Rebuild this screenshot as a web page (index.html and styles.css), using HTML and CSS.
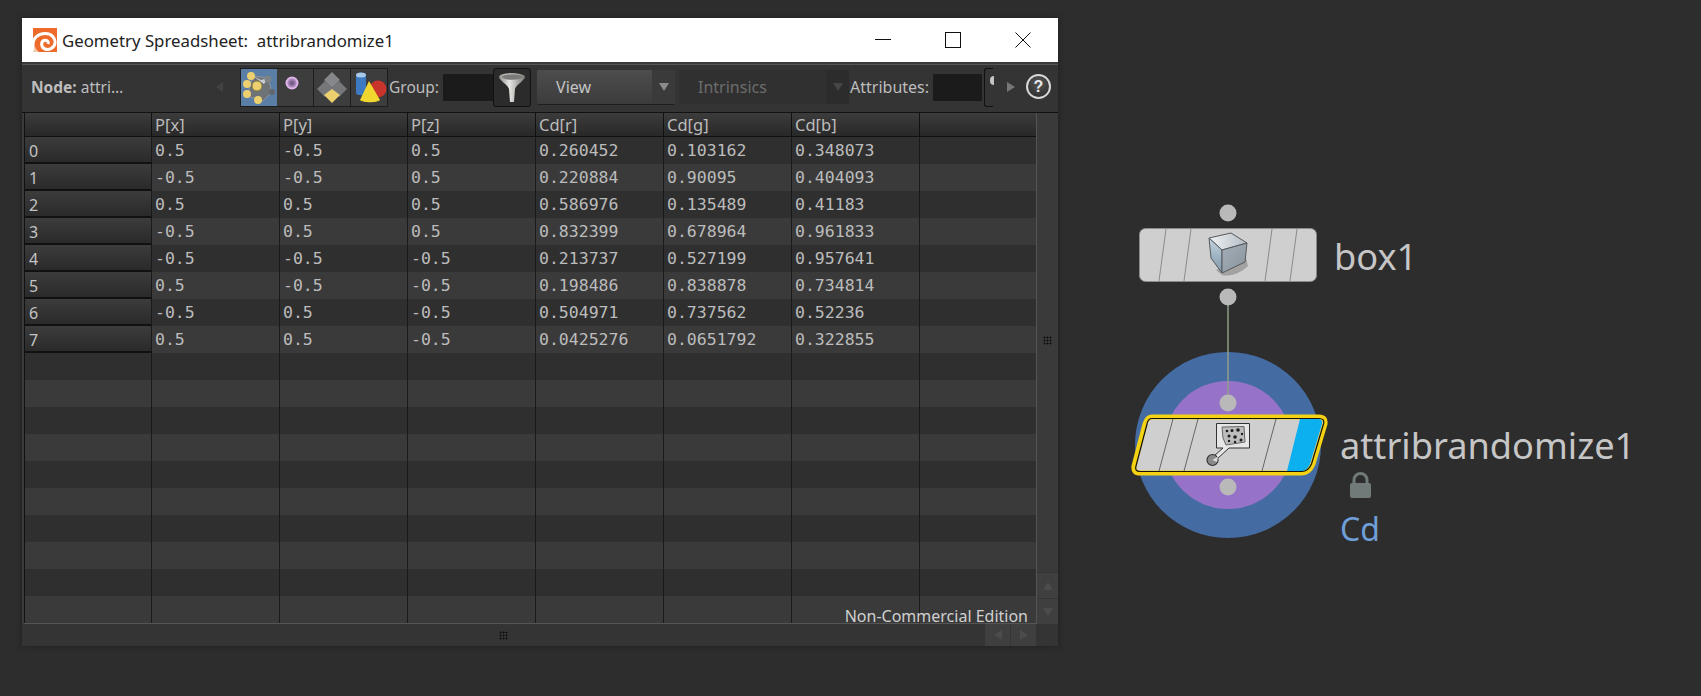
FILE: index.html
```html
<!DOCTYPE html>
<html lang="en">

<head>
    <meta charset="UTF-8">
    <title>Geometry Spreadsheet</title>
    <link rel="stylesheet" href="styles.css">
</head>

<body>
    <div class="window">
        <div class="titlebar">
            <svg class="logo" width="24" height="24" viewBox="0 0 24 24">
                <rect width="24" height="24" fill="#ee6a2a" />
                <path d="M0 24V17C0 10 5 5.500 12 5.500C18.500 5.500 22.500 10 22 15C21.500 20 16 22.500 12 21C8 19.500 7.500 14 11 12.500C13.500 11.500 16 13.500 15 16"
                    fill="none" stroke="#fff" stroke-width="3" />
                <path d="M0 24H6C3 22 2 19 2 17Z" fill="#f6c9ae" />
            </svg>
            <span class="title">Geometry Spreadsheet:&nbsp; attribrandomize1</span>
            <div class="win-controls">
                <svg width="16" height="16" viewBox="0 0 16 16"><path d="M0 7.500H16" stroke="#111" /></svg>
                <svg width="16" height="16" viewBox="0 0 16 16"><rect x="0.500" y="0.500" width="15" height="15" fill="none" stroke="#111" /></svg>
                <svg width="16" height="16" viewBox="0 0 16 16"><path d="M0.500 0.500L15.500 15.500M15.500 0.500L0.500 15.500" stroke="#111" /></svg>
            </div>
        </div>

        <div class="toolbar">
            <div class="node-name"><b>Node:</b> attri…</div>
            <span class="tri-left"></span>
            <div class="mode-group">
                <div class="mode-btn selected">
                    <svg width="36" height="36" viewBox="0 0 36 36">
                        <path d="M12 7L27 9L31 23L22 32L6 27Z" fill="#6e7377" stroke="#8f9499" />
                        <path d="M12 7L20 11L27 9L23 15" fill="#c9ccd0" />
                        <circle cx="27" cy="10" r="3.500" fill="#7c8287" />
                        <circle cx="31" cy="23" r="3" fill="#60676d" />
                        <circle cx="10" cy="7" r="4" fill="#ecd06f" />
                        <circle cx="6" cy="15" r="4" fill="#ecd06f" />
                        <circle cx="16" cy="17" r="5" fill="#ecd06f" stroke="#8a7c40" />
                        <circle cx="6" cy="25" r="4" fill="#ecd06f" />
                        <circle cx="17" cy="31" r="4" fill="#ecd06f" />
                    </svg>
                </div>
                <div class="mode-btn">
                    <svg width="36" height="36" viewBox="0 0 36 36">
                        <circle cx="15" cy="14" r="5.500" fill="#a884b8" stroke="#dfb5e8" stroke-width="2" />
                        <circle cx="15" cy="14" r="2.500" fill="#77628a" />
                    </svg>
                </div>
                <div class="mode-btn sep">
                    <svg width="36" height="36" viewBox="0 0 36 36">
                        <path d="M18 3L26 11L18 19L10 11Z" fill="#85878a" />
                        <path d="M9 12L17 20L9 28L1 20Z" fill="#75777a" transform="translate(2 0)" />
                        <path d="M27 12L35 20L27 28L19 20Z" fill="#75777a" transform="translate(-2 0)" />
                        <path d="M18 20L26 26L18 34L10 26Z" fill="#ecd06f" />
                    </svg>
                </div>
                <div class="mode-btn sep">
                    <svg width="36" height="36" viewBox="0 0 36 36">
                        <circle cx="27" cy="20" r="8.500" fill="#c8332c" />
                        <path d="M5 6C5 3 15 3 15 6V24C15 27 5 27 5 24Z" fill="#3d79c0" />
                        <ellipse cx="10" cy="6" rx="5" ry="2.500" fill="#a9c9e8" />
                        <path d="M18 12L29 31C26 34 12 34 9 31Z" fill="#f0d62e" />
                    </svg>
                </div>
            </div>
            <span class="tb-label group-label">Group:</span>
            <div class="tb-field"></div>
            <div class="funnel-btn">
                <svg width="30" height="34" viewBox="0 0 30 34">
                    <defs>
                        <linearGradient id="funnel-fill" x1="0" x2="1" y1="0" y2="0">
                            <stop offset="0" stop-color="#8e8e8a" />
                            <stop offset="0.400" stop-color="#e6e6e2" />
                            <stop offset="1" stop-color="#777774" />
                        </linearGradient>
                    </defs>
                    <path d="M2 6C2 1 28 1 28 6C28 9 19 14 18 18L17 31L13 31L12 18C11 14 2 9 2 6Z" fill="url(#funnel-fill)" />
                    <ellipse cx="15" cy="6" rx="10" ry="2.800" fill="#7b7b78" />
                </svg>
            </div>
            <div class="dropdown view-drop">
                <span class="drop-text">View</span>
                <span class="drop-arrow"><i></i></span>
            </div>
            <div class="dropdown intrinsics-drop">
                <span class="drop-text">Intrinsics</span>
                <span class="drop-arrow"><i></i></span>
            </div>
            <span class="tb-label attr-label">Attributes:</span>
            <div class="tb-field attr-field"></div>
            <div class="cut-btn"></div>
            <span class="tri-right"></span>
            <div class="help">?</div>
        </div>

        <div class="content">
            <div class="sheet">
                <div class="row head">
                    <div class="rowhead"></div>
                    <div class="cell">P[x]</div>
                    <div class="cell">P[y]</div>
                    <div class="cell">P[z]</div>
                    <div class="cell">Cd[r]</div>
                    <div class="cell">Cd[g]</div>
                    <div class="cell">Cd[b]</div>
                    <div class="cell last"></div>
                </div>
                <div class="row">
                    <div class="rowhead">0</div>
                    <div class="cell">0.5</div><div class="cell">-0.5</div><div class="cell">0.5</div>
                    <div class="cell">0.260452</div><div class="cell">0.103162</div><div class="cell">0.348073</div>
                    <div class="cell last"></div>
                </div>
                <div class="row alt">
                    <div class="rowhead">1</div>
                    <div class="cell">-0.5</div><div class="cell">-0.5</div><div class="cell">0.5</div>
                    <div class="cell">0.220884</div><div class="cell">0.90095</div><div class="cell">0.404093</div>
                    <div class="cell last"></div>
                </div>
                <div class="row">
                    <div class="rowhead">2</div>
                    <div class="cell">0.5</div><div class="cell">0.5</div><div class="cell">0.5</div>
                    <div class="cell">0.586976</div><div class="cell">0.135489</div><div class="cell">0.41183</div>
                    <div class="cell last"></div>
                </div>
                <div class="row alt">
                    <div class="rowhead">3</div>
                    <div class="cell">-0.5</div><div class="cell">0.5</div><div class="cell">0.5</div>
                    <div class="cell">0.832399</div><div class="cell">0.678964</div><div class="cell">0.961833</div>
                    <div class="cell last"></div>
                </div>
                <div class="row">
                    <div class="rowhead">4</div>
                    <div class="cell">-0.5</div><div class="cell">-0.5</div><div class="cell">-0.5</div>
                    <div class="cell">0.213737</div><div class="cell">0.527199</div><div class="cell">0.957641</div>
                    <div class="cell last"></div>
                </div>
                <div class="row alt">
                    <div class="rowhead">5</div>
                    <div class="cell">0.5</div><div class="cell">-0.5</div><div class="cell">-0.5</div>
                    <div class="cell">0.198486</div><div class="cell">0.838878</div><div class="cell">0.734814</div>
                    <div class="cell last"></div>
                </div>
                <div class="row">
                    <div class="rowhead">6</div>
                    <div class="cell">-0.5</div><div class="cell">0.5</div><div class="cell">-0.5</div>
                    <div class="cell">0.504971</div><div class="cell">0.737562</div><div class="cell">0.52236</div>
                    <div class="cell last"></div>
                </div>
                <div class="row alt">
                    <div class="rowhead">7</div>
                    <div class="cell">0.5</div><div class="cell">0.5</div><div class="cell">-0.5</div>
                    <div class="cell">0.0425276</div><div class="cell">0.0651792</div><div class="cell">0.322855</div>
                    <div class="cell last"></div>
                </div>
                <div class="row empty"><div class="rowhead"></div><div class="cell"></div><div class="cell"></div><div class="cell"></div><div class="cell"></div><div class="cell"></div><div class="cell"></div><div class="cell last"></div></div>
                <div class="row alt empty"><div class="rowhead"></div><div class="cell"></div><div class="cell"></div><div class="cell"></div><div class="cell"></div><div class="cell"></div><div class="cell"></div><div class="cell last"></div></div>
                <div class="row empty"><div class="rowhead"></div><div class="cell"></div><div class="cell"></div><div class="cell"></div><div class="cell"></div><div class="cell"></div><div class="cell"></div><div class="cell last"></div></div>
                <div class="row alt empty"><div class="rowhead"></div><div class="cell"></div><div class="cell"></div><div class="cell"></div><div class="cell"></div><div class="cell"></div><div class="cell"></div><div class="cell last"></div></div>
                <div class="row empty"><div class="rowhead"></div><div class="cell"></div><div class="cell"></div><div class="cell"></div><div class="cell"></div><div class="cell"></div><div class="cell"></div><div class="cell last"></div></div>
                <div class="row alt empty"><div class="rowhead"></div><div class="cell"></div><div class="cell"></div><div class="cell"></div><div class="cell"></div><div class="cell"></div><div class="cell"></div><div class="cell last"></div></div>
                <div class="row empty"><div class="rowhead"></div><div class="cell"></div><div class="cell"></div><div class="cell"></div><div class="cell"></div><div class="cell"></div><div class="cell"></div><div class="cell last"></div></div>
                <div class="row alt empty"><div class="rowhead"></div><div class="cell"></div><div class="cell"></div><div class="cell"></div><div class="cell"></div><div class="cell"></div><div class="cell"></div><div class="cell last"></div></div>
                <div class="row empty"><div class="rowhead"></div><div class="cell"></div><div class="cell"></div><div class="cell"></div><div class="cell"></div><div class="cell"></div><div class="cell"></div><div class="cell last"></div></div>
                <div class="row alt empty"><div class="rowhead"></div><div class="cell"></div><div class="cell"></div><div class="cell"></div><div class="cell"></div><div class="cell"></div><div class="cell"></div><div class="cell last"></div></div>
                <div class="watermark">Non-Commercial Edition</div>
            </div>
            <div class="vscroll">
                <div class="grip"></div>
                <div class="scroll-btns">
                    <div class="scroll-btn"><i class="up"></i></div>
                    <div class="scroll-btn"><i class="down"></i></div>
                </div>
            </div>
        </div>

        <div class="hscroll">
            <div class="grip"></div>
            <div class="hscroll-btns">
                <div class="scroll-btn"><i class="left"></i></div>
                <div class="scroll-btn"><i class="right"></i></div>
            </div>
        </div>
    </div>

    <!-- node graph: places are the content here -->
    <div class="graph">
        <svg class="graph-svg" width="1701" height="696" viewBox="0 0 1701 696">
            <defs>
                <linearGradient id="cube-left" x1="0" x2="0" y1="0" y2="1">
                    <stop offset="0" stop-color="#c3d3df" />
                    <stop offset="1" stop-color="#7f98aa" />
                </linearGradient>
                <linearGradient id="cube-right" x1="0" x2="1" y1="0" y2="1">
                    <stop offset="0" stop-color="#a3aeb8" />
                    <stop offset="1" stop-color="#8b949c" />
                </linearGradient>
                <linearGradient id="cube-top" x1="0" x2="1" y1="0" y2="0">
                    <stop offset="0" stop-color="#f0f3f5" />
                    <stop offset="1" stop-color="#b3bcc3" />
                </linearGradient>
            </defs>
            <circle cx="1228" cy="445" r="93" fill="#446ca3" />
            <circle cx="1228" cy="445" r="64" fill="#9672c9" />
            <path d="M1228 305V400" stroke="#8d9f83" stroke-width="1.500" />

            <circle cx="1228" cy="213" r="8.500" fill="#b9b9b9" />
            <circle cx="1228" cy="297" r="8.500" fill="#b9b9b9" />
            <rect x="1139.500" y="228.500" width="177" height="53" rx="6" fill="#cfcfcf" stroke="#8a8a8a" />
            <path d="M1166 229L1159 281M1191 229L1184 281M1272 229L1265 281M1297 229L1290 281" stroke="#8b8b8b" />
            <path d="M1216 270L1246 258L1248 266C1240 274 1228 277 1222 275Z" fill="#8e8e8e" opacity="0.7" />
            <path d="M1209 238L1231 233L1247 243L1222 250Z" fill="url(#cube-top)" stroke="#55595c" />
            <path d="M1209 238L1222 250L1222 273L1211 258Z" fill="url(#cube-left)" stroke="#55595c" />
            <path d="M1222 250L1247 243L1245 262L1222 273Z" fill="url(#cube-right)" stroke="#55595c" />

            <circle cx="1228" cy="403" r="8.500" fill="#b9b9b9" />
            <circle cx="1228" cy="487" r="8.500" fill="#b9b9b9" />
            <path d="M1152 417H1319Q1326 417 1325 424L1313 464Q1309 473 1302 473H1140Q1133 473 1134 466L1145 424Q1147 417 1152 417Z"
                fill="#cfcfcf" stroke="#f5d313" stroke-width="5" />
            <path d="M1300 419H1318Q1323 419 1322 424L1310 464Q1307 471 1302 471H1287Z" fill="#0cb0ee" />
            <path d="M1152 418.500H1319Q1325 418.500 1323.500 424L1311.500 464Q1308 471.500 1302 471.500H1140Q1134.500 471.500 1136 466L1147 424Q1148 418.500 1152 418.500Z"
                fill="none" stroke="#111" stroke-width="1.200" />
            <path d="M1173 419L1159 471M1198 419L1184 471M1276 419L1262 471" stroke="#666" />
            <path d="M1216.500 423.500H1249.500V448H1229L1217 459L1214 456L1223 448H1216.500Z" fill="#e6e6e6" stroke="#333" />
            <path d="M1222 427L1244 426.500L1245 442L1226 445L1223 438Z" fill="#bdbdbd" stroke="#666" />
            <circle cx="1227" cy="431" r="1.300" fill="#1c1c1c" />
            <circle cx="1232" cy="430.500" r="1.500" fill="#1c1c1c" />
            <circle cx="1238" cy="430" r="1.800" fill="#1c1c1c" />
            <circle cx="1242" cy="434" r="1.200" fill="#1c1c1c" />
            <circle cx="1229" cy="436" r="1.500" fill="#1c1c1c" />
            <circle cx="1235" cy="437" r="1.800" fill="#1c1c1c" />
            <circle cx="1241" cy="440" r="1.500" fill="#1c1c1c" />
            <circle cx="1229" cy="441" r="1.200" fill="#1c1c1c" />
            <circle cx="1235" cy="442" r="1.200" fill="#1c1c1c" />
            <circle cx="1212.500" cy="460" r="5.500" fill="#8a8a8a" stroke="#333" stroke-width="1.200" />
            <path d="M1212.500 460L1218 456.500L1217 462Z" fill="#dcdcdc" />

            <path d="M1354 483V480A6.500 6.500 0 0 1 1367 480V483" fill="none" stroke="#6f7a79" stroke-width="3" />
            <rect x="1350" y="483" width="21" height="15" rx="2" fill="#6f7a79" />
        </svg>
        <span class="node-label box-label">box1</span>
        <span class="node-label attrib-label">attribrandomize1</span>
        <span class="node-label cd-label">Cd</span>
    </div>
</body>

</html>
```

FILE: styles.css
```css
/* Page */
body {
    margin: 0;
    height: 696px;
    overflow: hidden;
    background: #2d2d2d;
    font-family: "Noto Sans", sans-serif;
    color: #c8c8c8;
}

/* Window */
.window {
    width: 1036px;
    height: 628px;
    margin: 18px 0 0 22px;
    display: flex;
    flex-direction: column;
    background: #3a3a3a;
    box-shadow: 0 0 6px rgba(0, 0, 0, 0.35);
}

.titlebar {
    height: 44px;
    flex: none;
    display: flex;
    align-items: center;
    background: #fff;
    padding-left: 11px;
    color: #222;
}

.title {
    margin-left: 5px;
    font-size: 16.800px;
}

.win-controls {
    margin-left: auto;
    margin-right: 27px;
    display: flex;
    gap: 54px;
}

/* Toolbar */
.toolbar {
    height: 49px;
    flex: none;
    box-sizing: border-box;
    display: flex;
    align-items: center;
    background: #343434;
    border-top: 1px solid #555;
    border-bottom: 1px solid #111;
    margin-top: 2px;
    padding-bottom: 3px;
    position: relative;
}

.node-name {
    width: 183px;
    box-sizing: border-box;
    padding-left: 9px;
    font-size: 15.500px;
    color: #bdbdbd;
}

.tri-left {
    border: 5px solid transparent;
    border-right: 7px solid #424242;
    margin-right: 18px;
    margin-left: 6px;
}

.mode-group {
    display: flex;
    height: 37px;
    background: #3d3d3d;
    box-shadow: 0 0 0 1px #1d1d1d;
}

.mode-btn {
    width: 36px;
    height: 37px;
}

.mode-btn.selected {
    background: #5a7ea6;
}

.mode-btn.sep {
    border-left: 1px solid #1d1d1d;
}

.tb-label {
    font-size: 16px;
    color: #bdbdbd;
}

.group-label {
    margin-left: 2px;
    font-size: 15.500px;
}

.tb-field {
    width: 50px;
    height: 27px;
    background: #1b1b1b;
    margin-left: 4px;
}

.funnel-btn {
    width: 38px;
    height: 39px;
    box-sizing: border-box;
    padding: 2px 3px;
    background: #2b2b2b;
    border: 1px solid #111;
    border-radius: 3px;
}

.dropdown {
    height: 34px;
    display: flex;
    align-items: center;
    justify-content: space-between;
    font-size: 16px;
    border-radius: 2px;
}

.drop-text {
    padding-left: 19px;
}

.drop-arrow {
    width: 23px;
    height: 100%;
    display: flex;
    align-items: center;
    justify-content: center;
}

.drop-arrow i {
    border: 5px solid transparent;
    border-top: 8px solid #8b8b8b;
    border-bottom: 0;
}

.view-drop {
    width: 138px;
    margin-left: 6px;
    background: linear-gradient(#4d4d4d, #3c3c3c);
    color: #c4c4c4;
    box-shadow: 0 1px 0 #1d1d1d;
}

.view-drop .drop-arrow {
    background: #3a3a3a;
}

.intrinsics-drop {
    width: 170px;
    margin-left: 4px;
    background: #303030;
    color: #6c6c6c;
}

.intrinsics-drop .drop-arrow {
    background: #2c2c2c;
}

.intrinsics-drop .drop-arrow i {
    border-top-color: #464646;
}

.attr-label {
    margin-left: 1px;
}

.attr-field {
    width: 49px;
}

.cut-btn {
    width: 9px;
    height: 39px;
    margin-left: 2px;
    box-sizing: border-box;
    border: 1px solid #111;
    border-right: 0;
    border-radius: 3px 0 0 3px;
    position: relative;
}

/* little bit of the next button peeking through */
.cut-btn::after {
    content: "";
    position: absolute;
    left: 5px;
    top: 7px;
    width: 4px;
    height: 9px;
    background: #c4c4c4;
    border-radius: 4px 0 0 4px;
}

.tri-right {
    border: 5px solid transparent;
    border-left: 8px solid #777;
    margin-left: 14px;
}

.help {
    position: absolute;
    right: 7px;
    top: 9px;
    box-sizing: border-box;
    width: 25px;
    height: 25px;
    border: 2px solid #d8d8d8;
    border-radius: 50%;
    background: radial-gradient(circle at 50% 30%, #555, #2a2a2a);
    color: #e8e8e8;
    font: bold 16px/21px "Liberation Sans", sans-serif;
    text-align: center;
}

/* Spreadsheet */
.content {
    flex: 1;
    min-height: 0;
    display: flex;
}

.sheet {
    position: relative;
    width: 1012px;
    margin-left: 2px;
    background: #2f2f2f;
    border-right: 1px solid #555;
    border-bottom: 1px solid #555;
}

.row {
    display: flex;
    height: 27px;
    background: #2f2f2f;
}

.row.alt {
    background: #3a3a3a;
}

.row.head {
    height: 24px;
    box-shadow: 0 -1px 0 #111;
}

.rowhead {
    width: 128px;
    flex: none;
    box-sizing: border-box;
    padding-left: 4px;
    font-size: 16px;
    line-height: 28px;
    background: linear-gradient(#3c3c3c, #2a2a2a);
    border: solid #111;
    border-width: 0 0 2px 1px;
    color: #c4c4c4;
}

.empty .rowhead {
    background: none;
    border-bottom: 0;
}

.cell {
    width: 128px;
    flex: none;
    box-sizing: border-box;
    padding-left: 3px;
    border-right: 1px solid #1a1a1a;
    font-family: "DejaVu Sans Mono", monospace;
    font-size: 16.500px;
    line-height: 28px;
    color: #bcbcbc;
}

.empty .rowhead,
.row:not(.head) .rowhead {
    border-right: 1px solid #1a1a1a;
}

.cell.last {
    width: 116px;
    border-right: 0;
}

.head .cell,
.head .rowhead {
    background: linear-gradient(#3c3c3c, #282828);
    font-family: "Noto Sans", sans-serif;
    font-size: 16.500px;
    line-height: 24px;
    border-right: 1px solid #111;
    border-bottom: 1px solid #111;
}

.head .cell.last {
    border-right: 0;
}

.watermark {
    position: absolute;
    right: 8px;
    bottom: -5px;
    font-size: 16px;
    line-height: 24px;
    color: #d0d0d0;
}

/* Scroll bars */
.vscroll {
    width: 21px;
    flex: none;
    display: flex;
    flex-direction: column;
    align-items: center;
    justify-content: flex-end;
    position: relative;
}

.grip {
    width: 9px;
    height: 9px;
    background-image: radial-gradient(#111 45%, transparent 50%);
    background-size: 3px 3px;
}

.vscroll .grip {
    position: absolute;
    top: 223px;
}

.scroll-btn {
    display: flex;
    align-items: center;
    justify-content: center;
    background: #3f3f3f;
}

.scroll-btns .scroll-btn {
    width: 21px;
    height: 26px;
    border-top: 1px solid #343434;
    box-sizing: border-box;
}

.scroll-btn i {
    border: 5px solid transparent;
}

.scroll-btn .up {
    border-bottom: 8px solid #4c4c4c;
    border-top: 0;
}

.scroll-btn .down {
    border-top: 8px solid #4c4c4c;
    border-bottom: 0;
}

.scroll-btn .left {
    border-right: 8px solid #4c4c4c;
    border-left: 0;
}

.scroll-btn .right {
    border-left: 8px solid #4c4c4c;
    border-right: 0;
}

.hscroll {
    height: 22px;
    flex: none;
    display: flex;
    align-items: center;
    position: relative;
    background: #343434;
    padding-right: 22px;
}

.hscroll .grip {
    margin: 0 auto;
}

.hscroll-btns {
    display: flex;
    flex: none;
}

.hscroll-btns .scroll-btn {
    width: 26px;
    height: 22px;
    box-sizing: border-box;
    border-left: 1px solid #343434;
}

/* Node graph */
.graph {
    position: absolute;
    inset: 0;
    pointer-events: none;
}

.graph-svg {
    position: absolute;
    left: 0;
    top: 0;
}

.node-label {
    position: absolute;
    font-size: 36.200px;
    line-height: 44px;
    color: #c6c6c6;
}

.box-label {
    left: 1334px;
    top: 234px;
}

.attrib-label {
    left: 1340px;
    top: 423px;
}

.cd-label {
    left: 1340px;
    top: 507px;
    font-size: 32px;
    color: #6f9fd8;
}
```
